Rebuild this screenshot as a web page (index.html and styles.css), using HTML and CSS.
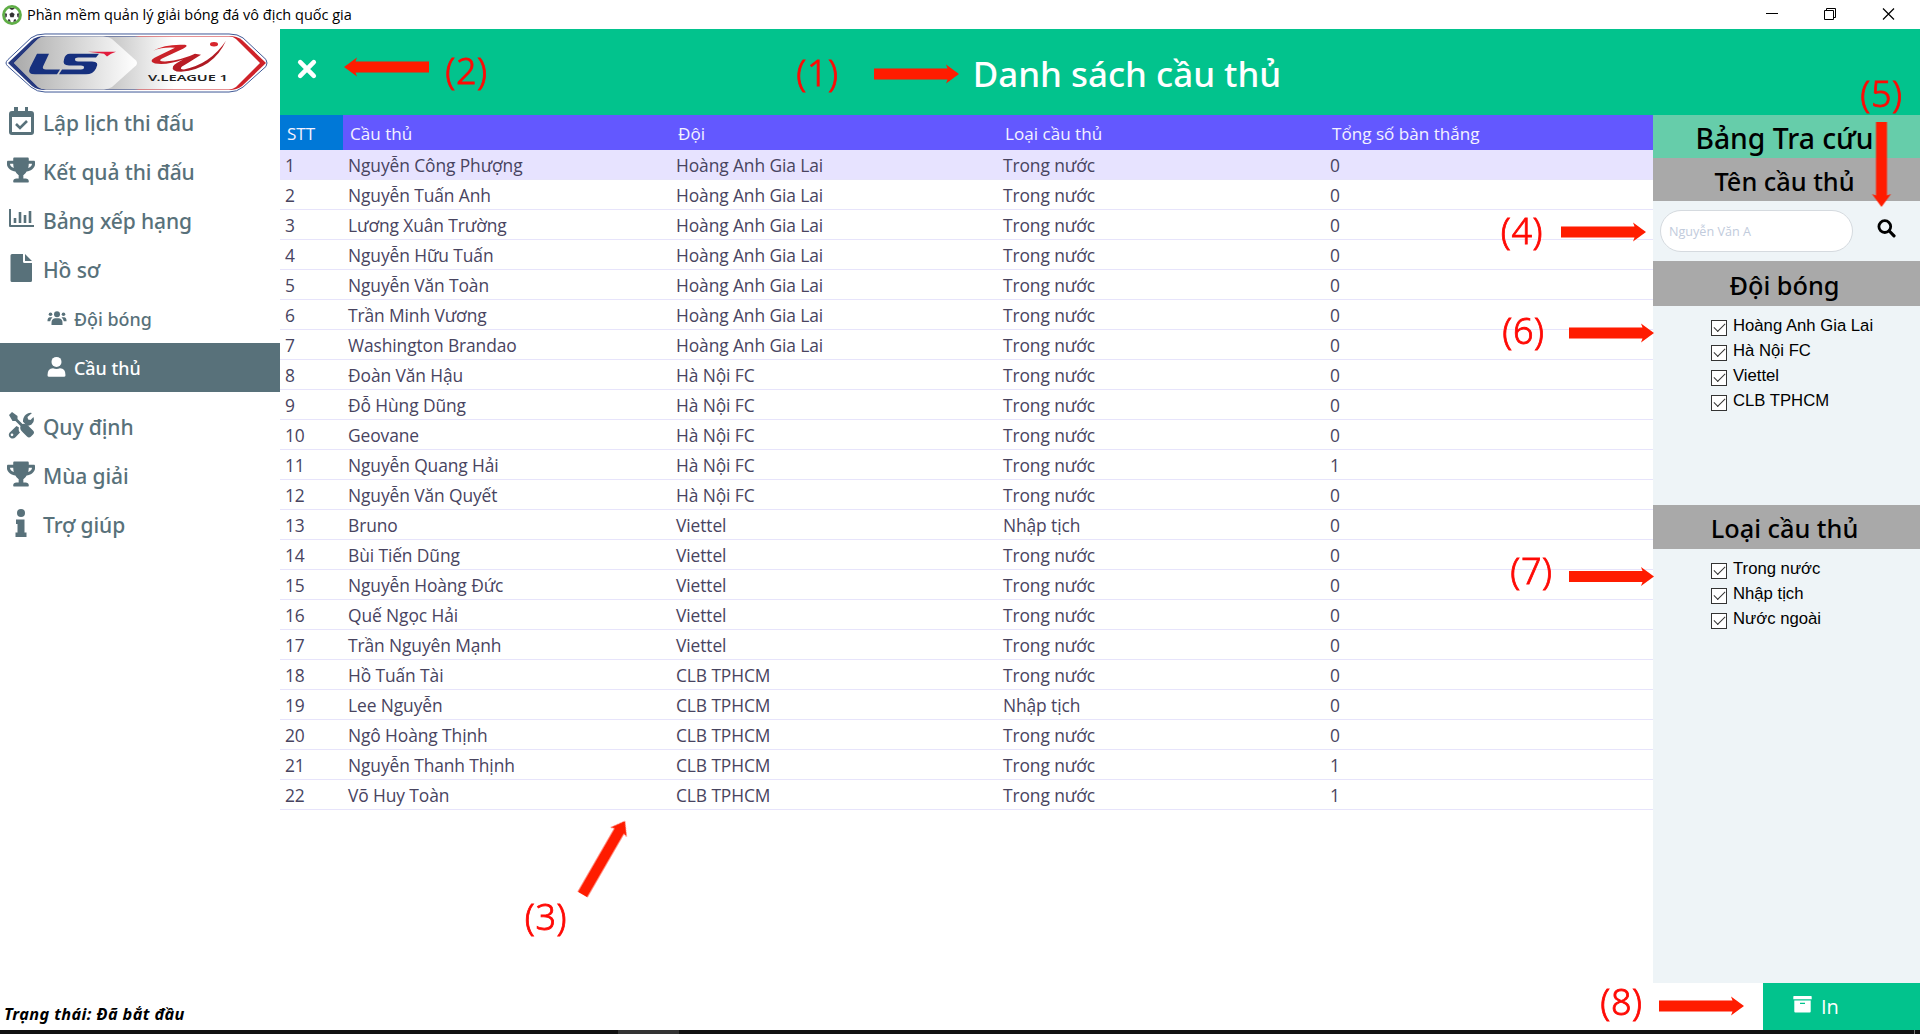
FILE: index.html
```
<!DOCTYPE html>
<html lang="vi">
<head>
<meta charset="utf-8">
<title>Phần mềm quản lý giải bóng đá vô địch quốc gia</title>
<link rel="stylesheet" href="styles.css">
</head>
<body>
<div class="window">
  <header class="titlebar">
    <svg class="ball" width="20" height="20" viewBox="0 0 20 20"><circle cx="10" cy="10" r="9.9" fill="#5fae46"/><circle cx="10" cy="10" r="7.2" fill="#fff"/><g fill="#333"><path d="M10 7.200l2.600 1.900-1 3.100H8.400l-1-3.100z"/><path d="M7 3.600l3 1.500 3-1.500-1.600-.7H8.600zM3 8.200l2 .6-.3 3L3.400 13zM17 8.200l-2 .6.3 3 1.300 1.200zM6 14.200l2 .3.700 2.500-2.500-1zM14 14.200l-2 .3-.7 2.500 2.500-1z"/></g></svg>
    <span class="titlebar-text">Phần mềm quản lý giải bóng đá vô địch quốc gia</span>
    <div class="controls">
      <svg width="58" height="29" viewBox="0 0 58 29"><path d="M23 13.500h12" stroke="#000"/></svg>
      <svg width="58" height="29" viewBox="0 0 58 29"><path d="M23.500 10.500h9v9h-9zM25.500 10.500v-2h9v9h-2" fill="none" stroke="#000"/></svg>
      <svg width="58" height="29" viewBox="0 0 58 29"><path d="M24 8.500l11 11M35 8.500l-11 11" stroke="#000" stroke-width="1.200"/></svg>
    </div>
  </header>

  <div class="main">
    <aside class="sidebar">
      <div class="logo">
        <svg width="264" height="60" viewBox="0 0 264 61" preserveAspectRatio="none">
          <defs>
            <linearGradient id="edge"><stop offset=".49" stop-color="#26397f"/><stop offset=".51" stop-color="#cf2229"/></linearGradient>
            <linearGradient id="silver"><stop offset="0" stop-color="#aaa"/><stop offset="1" stop-color="#fff"/></linearGradient>
            <linearGradient id="silver2"><stop offset=".4" stop-color="#c8c8c8"/><stop offset=".65" stop-color="#fff"/></linearGradient>
            <linearGradient id="swoosh" y2="1"><stop offset="0" stop-color="#e0262c"/><stop offset="1" stop-color="#9a1620"/></linearGradient>
          </defs>
          <path d="M1 30.500Q1 29 3 27L26 5Q31 1 40 1H224Q233 1 238 5L261 27Q263 30.500 261 34L238 55Q232 60 224 60H40Q32 60 26 55L3 34Q1 32 1 30.500z" fill="#fff" stroke="#3e5795"/>
          <path d="M3 30.500L27 7Q32 3 40 3H224Q232 3 237 7L261 30.500 237 54Q232 58 224 58H40Q32 58 27 54z" fill="url(#edge)"/>
          <path d="M9 30.500L33 6Q36 3.500 41 3.500H224Q228 3.500 231 6L255 30.500 231 55Q228 57.500 224 57.500H41Q36 57.500 33 55z" fill="url(#silver2)"/>
          <path d="M9 30.500L33 6Q36 3.500 41 3.500H98Q104 4 107 6L131 28Q133 30.500 131 33L107 55Q103 57.500 99 57.500H41Q36 57.500 33 55z" fill="url(#silver)"/>
          <g fill="#16307e"><path d="M32 21h12l-6 13q-1 3 3 3h14l-3 5H30q-8 0-5-7z"/><path d="M65 21h29l-3 4H73q-3 0-3 2t3 2h14q8 0 4 7-3 6-10 6H54l3-5h19q3 0 3-2t-3-2H64q-7 0-5-6 1-6 6-6z"/></g>
          <path d="M83 19h28l-5 2-4 3-3-3z" fill="#e21b3c"/>
          <path d="M148 18Q160 11 180 12 184 13 178 16L157 26Q152 29 160 29 178 27 190 21L196 22Q182 31 177 34 174 37 179 37 205 32 221 8 208 37 176 39.500 166 39 168 34 170 31 178 27 162 33 150 31 143 29 150 25L170 15Q158 14 148 18z" fill="url(#swoosh)"/>
          <ellipse cx="209" cy="11.500" rx="4" ry="2.300" fill="#d7262d"/>
          <text x="143" y="48.500" class="logo-text" textLength="80" lengthAdjust="spacingAndGlyphs">V.LEAGUE 1</text>
        </svg>
      </div>
      <nav class="nav">
        <a class="item"><svg class="icon" width="28" height="30" viewBox="0 0 28 30"><path fill-rule="evenodd" d="M7 1h4v4h7V1h3v4h3q3 0 3 3v18q0 3-3 3H5q-3 0-3-3V8q0-3 3-3h2zM5 11v15h19V11z"/><path d="M9 18l4 4 7-7" fill="none" stroke="#58717a" stroke-width="2.600"/></svg>Lập lịch thi đấu</a>
        <a class="item"><svg class="icon" width="28" height="26" viewBox="0 0 576 512"><path d="M552 64H448V24c0-13-11-24-24-24H152c-13 0-24 11-24 24v40H24C11 64 0 75 0 88v56c0 36 22 72 62 101 31 22 70 37 110 41 32 53 68 74 68 74v72h-48c-35 0-64 21-64 56v12c0 7 5 12 12 12h296c7 0 12-5 12-12v-12c0-35-29-56-64-56h-48v-72s36-21 68-74c40-4 79-19 110-41 39-28 62-65 62-101V88c0-13-11-24-24-24zM99 193c-25-18-35-38-35-49v-16h64c1 33 5 61 12 86-15-5-29-12-41-21zm413-49c0 16-17 36-35 49-12 9-26 16-41 21 7-25 11-53 12-86h64z"/></svg>Kết quả thi đấu</a>
        <a class="item"><svg class="icon" width="28" height="30" viewBox="0 0 28 30"><path d="M2 5h2v16h23v2H3q-1 0-1-1z"/><path d="M8 14v5M13 8v11M18 11v8M23 7v12" fill="none" stroke="#58717a" stroke-width="2.600"/></svg>Bảng xếp hạng</a>
        <a class="item"><svg class="icon" width="28" height="30" viewBox="0 0 28 30"><path d="M5 1h11v7.500q0 1.500 1.500 1.500H25v17.500q0 1.500-1.500 1.500H5q-1.500 0-1.500-1.500v-25Q3.500 1 5 1zM18 1l7 7h-7z"/></svg>Hồ sơ</a>
        <a class="item sub"><svg class="icon" width="20" height="16" viewBox="0 0 20 16"><circle cx="10" cy="4.200" r="3"/><circle cx="3.500" cy="4.300" r="1.800"/><circle cx="16.500" cy="4.300" r="1.800"/><path d="M4.500 15v-2Q4.500 8.700 8 8.300h4q3.500.4 3.500 4.700v2zM.5 10.500Q.5 7.500 3 7.200h2.500q-2 1.800-2.300 4H.5zM19.500 10.500q0-3-2.500-3.300h-2.500q2 1.800 2.300 4h2.700z"/></svg>Đội bóng</a>
        <a class="item sub active"><svg class="icon" width="20" height="22" viewBox="0 0 20 22"><circle cx="9.500" cy="5.900" r="5"/><path d="M.5 19.200q0-7 5.500-7 3.500 1.600 7 0 5.500 0 5.500 7 0 1.600-1.600 1.600H2.100Q.5 20.800.5 19.200z"/></svg>Cầu thủ</a>
        <a class="item gap"><svg class="icon" width="28" height="28" viewBox="0 0 28 28"><path d="M2 4l3-3 5.500 4v3l5 5q3-1 5.500 1.500l5 5q2 2 0 4l-2 2q-2 2-4 0l-5-5q-2.500-2.500-1.500-5.500l-5-5H5.500z"/><path d="M26.500 6q1.500 5-2 7.500-2 1.500-4.500 1l-1.500-1.300-2.500-2.400V10q0-4 3-6.500Q22 1 25 2l-4.500 4 .6 2.500 2.400.6zM12 16.500q-1 3 1 5l-4.500 4.700q-2 2-4.500 1-3.500-2-1.500-5.500l7-6.700zM5 22.500a1.300 1.300 0 100 2.700 1.300 1.300 0 000-2.700z" fill-rule="evenodd"/></svg>Quy định</a>
        <a class="item"><svg class="icon" width="28" height="26" viewBox="0 0 576 512"><path d="M552 64H448V24c0-13-11-24-24-24H152c-13 0-24 11-24 24v40H24C11 64 0 75 0 88v56c0 36 22 72 62 101 31 22 70 37 110 41 32 53 68 74 68 74v72h-48c-35 0-64 21-64 56v12c0 7 5 12 12 12h296c7 0 12-5 12-12v-12c0-35-29-56-64-56h-48v-72s36-21 68-74c40-4 79-19 110-41 39-28 62-65 62-101V88c0-13-11-24-24-24zM99 193c-25-18-35-38-35-49v-16h64c1 33 5 61 12 86-15-5-29-12-41-21zm413-49c0 16-17 36-35 49-12 9-26 16-41 21 7-25 11-53 12-86h64z"/></svg>Mùa giải</a>
        <a class="item"><svg class="icon" width="28" height="30" viewBox="0 0 28 30"><circle cx="14" cy="5" r="4"/><path d="M9 11.500h8.500v13H19.500V29H8.500v-4.500h2v-8.500H9z"/></svg>Trợ giúp</a>
      </nav>
      <footer class="status">Trạng thái: Đã bắt đầu</footer>
    </aside>

    <section class="content">
      <header class="banner">
        <button class="close"><svg width="22" height="22" viewBox="0 0 22 22"><path d="M4.200 4.200l13.600 13.600M17.800 4.200L4.200 17.800" stroke="#fff" stroke-width="4.600" stroke-linecap="round"/></svg></button>
        <h1>Danh sách cầu thủ</h1>
      </header>
      <div class="body">
        <table class="players">
          <thead><tr><th class="c-no">STT</th><th class="c-name">Cầu thủ</th><th class="c-team">Đội</th><th class="c-kind">Loại cầu thủ</th><th>Tổng số bàn thắng</th></tr></thead>
          <tbody>
            <tr class="selected"><td>1</td><td>Nguyễn Công Phượng</td><td>Hoàng Anh Gia Lai</td><td>Trong nước</td><td>0</td></tr>
            <tr><td>2</td><td>Nguyễn Tuấn Anh</td><td>Hoàng Anh Gia Lai</td><td>Trong nước</td><td>0</td></tr>
            <tr><td>3</td><td>Lương Xuân Trường</td><td>Hoàng Anh Gia Lai</td><td>Trong nước</td><td>0</td></tr>
            <tr><td>4</td><td>Nguyễn Hữu Tuấn</td><td>Hoàng Anh Gia Lai</td><td>Trong nước</td><td>0</td></tr>
            <tr><td>5</td><td>Nguyễn Văn Toàn</td><td>Hoàng Anh Gia Lai</td><td>Trong nước</td><td>0</td></tr>
            <tr><td>6</td><td>Trần Minh Vương</td><td>Hoàng Anh Gia Lai</td><td>Trong nước</td><td>0</td></tr>
            <tr><td>7</td><td>Washington Brandao</td><td>Hoàng Anh Gia Lai</td><td>Trong nước</td><td>0</td></tr>
            <tr><td>8</td><td>Đoàn Văn Hậu</td><td>Hà Nội FC</td><td>Trong nước</td><td>0</td></tr>
            <tr><td>9</td><td>Đỗ Hùng Dũng</td><td>Hà Nội FC</td><td>Trong nước</td><td>0</td></tr>
            <tr><td>10</td><td>Geovane</td><td>Hà Nội FC</td><td>Trong nước</td><td>0</td></tr>
            <tr><td>11</td><td>Nguyễn Quang Hải</td><td>Hà Nội FC</td><td>Trong nước</td><td>1</td></tr>
            <tr><td>12</td><td>Nguyễn Văn Quyết</td><td>Hà Nội FC</td><td>Trong nước</td><td>0</td></tr>
            <tr><td>13</td><td>Bruno</td><td>Viettel</td><td>Nhập tịch</td><td>0</td></tr>
            <tr><td>14</td><td>Bùi Tiến Dũng</td><td>Viettel</td><td>Trong nước</td><td>0</td></tr>
            <tr><td>15</td><td>Nguyễn Hoàng Đức</td><td>Viettel</td><td>Trong nước</td><td>0</td></tr>
            <tr><td>16</td><td>Quế Ngọc Hải</td><td>Viettel</td><td>Trong nước</td><td>0</td></tr>
            <tr><td>17</td><td>Trần Nguyên Mạnh</td><td>Viettel</td><td>Trong nước</td><td>0</td></tr>
            <tr><td>18</td><td>Hồ Tuấn Tài</td><td>CLB TPHCM</td><td>Trong nước</td><td>0</td></tr>
            <tr><td>19</td><td>Lee Nguyễn</td><td>CLB TPHCM</td><td>Nhập tịch</td><td>0</td></tr>
            <tr><td>20</td><td>Ngô Hoàng Thịnh</td><td>CLB TPHCM</td><td>Trong nước</td><td>0</td></tr>
            <tr><td>21</td><td>Nguyễn Thanh Thịnh</td><td>CLB TPHCM</td><td>Trong nước</td><td>1</td></tr>
            <tr><td>22</td><td>Võ Huy Toàn</td><td>CLB TPHCM</td><td>Trong nước</td><td>1</td></tr>
          </tbody>
        </table>
        <aside class="filters">
          <h2 class="head lookup">Bảng Tra cứu</h2>
          <h3 class="head name">Tên cầu thủ</h3>
          <div class="search">
            <input class="field" type="text" placeholder="Nguyễn Văn A">
            <svg width="19" height="19" viewBox="0 0 19 19"><circle cx="7.800" cy="7.600" r="5.900" fill="none" stroke="#000" stroke-width="2.800"/><path d="M12.300 12l4.700 4.800" stroke="#000" stroke-width="3.200" stroke-linecap="round"/></svg>
          </div>
          <h3 class="head team">Đội bóng</h3>
          <div class="checks teams">
            <label class="check"><i class="box"></i><span>Hoàng Anh Gia Lai</span></label>
            <label class="check"><i class="box"></i><span>Hà Nội FC</span></label>
            <label class="check"><i class="box"></i><span>Viettel</span></label>
            <label class="check"><i class="box"></i><span>CLB TPHCM</span></label>
          </div>
          <h3 class="head kind">Loại cầu thủ</h3>
          <div class="checks kinds">
            <label class="check"><i class="box"></i><span>Trong nước</span></label>
            <label class="check"><i class="box"></i><span>Nhập tịch</span></label>
            <label class="check"><i class="box"></i><span>Nước ngoài</span></label>
          </div>
        </aside>
      </div>
      <footer class="actions">
        <button class="print"><svg width="19" height="17" viewBox="0 0 19 17"><path d="M1 0h17q.7 0 .7.700V3.300H.3V.700Q.3 0 1 0z" fill="#fff"/><path fill="#fff" fill-rule="evenodd" d="M1.300 4.500h16.400v11q0 1-1 1H2.300q-1 0-1-1zM7 6.700v1.200h5V6.700z"/></svg>In</button>
      </footer>
    </section>
  </div>
  <div class="taskbar"><span class="task"></span><span class="edge"></span></div>

  <svg class="notes" width="1920" height="1034" viewBox="0 0 1920 1034">
    <defs>
      <filter id="soft" x="-10%" y="-50%" width="120%" height="200%"><feGaussianBlur stdDeviation=".7"/></filter>
      <path id="arrow" d="M0 0L-13-9.500-11.500-5.500H-85V5.500H-11.500L-13 9.500z"/>
    </defs>
    <g fill="#ff1c00">
      <g filter="url(#soft)">
        <use href="#arrow" transform="translate(959 74)"/>
        <use href="#arrow" transform="translate(344 67) rotate(180)"/>
        <use href="#arrow" transform="translate(625 821) rotate(-60)"/>
        <use href="#arrow" transform="translate(1646 232)"/>
        <use href="#arrow" transform="translate(1654 333)"/>
        <use href="#arrow" transform="translate(1654 576.500)"/>
        <use href="#arrow" transform="translate(1744 1006)"/>
        <use href="#arrow" transform="translate(1881.500 207) rotate(90)"/>
      </g>
    </g>
    <g class="labels">
      <text x="817.500" y="85.500">(1)</text><text x="466.500" y="83.500">(2)</text><text x="546" y="930">(3)</text><text x="1522" y="243.500">(4)</text>
      <text x="1881.500" y="107">(5)</text><text x="1523.500" y="344">(6)</text><text x="1531.500" y="584">(7)</text><text x="1621.500" y="1015">(8)</text>
    </g>
  </svg>
</div>
</body>
</html>
```
FILE: styles.css
```
* { box-sizing: border-box; }
body {
  margin: 0;
  font-family: "Open Sans", "Noto Sans", sans-serif;
  color: #000;
  background: #fff;
}
button { border: 0; padding: 0; font-family: inherit; }
h1, h2, h3 { margin: 0; font-family: "Noto Sans", sans-serif; font-weight: 500; }

.window {
  position: relative;
  display: flex;
  flex-direction: column;
  width: 1920px;
  height: 1034px;
  overflow: hidden;
}

.titlebar { display: flex; align-items: center; height: 29px; padding: 0 3px 0 2px; }
.titlebar-text { margin-left: 5px; font-size: 14.5px; }
.controls { display: flex; margin-left: auto; }

.main { display: flex; flex: 1; min-height: 0; }

.sidebar { display: flex; flex-direction: column; width: 280px; }
.logo { height: 69px; padding: 4px 0 0 5px; }
.logo svg { display: block; }
.logo-text { font: 600 9px "Noto Sans", sans-serif; fill: #222; }
.nav { display: flex; flex-direction: column; }
.item {
  display: flex;
  align-items: center;
  gap: 8px;
  height: 49px;
  padding-left: 8px;
  font: 500 21px "Noto Sans", sans-serif;
  letter-spacing: -0.1px;
  color: #58717a;
  fill: #58717a;
}
.icon { flex: none; margin: 0 1px 4px -1px; }
.sub { gap: 7px; padding-left: 47px; font-size: 17.9px; letter-spacing: 0; }
.sub .icon { margin: 0 0 2px; }
.active { background: #58717a; color: #fff; fill: #fff; }
.gap { margin-top: 10px; }
.item:not(.sub) .icon { margin-right: 0; }
.status {
  margin-top: auto;
  padding: 0 0 5px 4px;
  font-size: 16.3px;
  font-weight: 700;
  font-style: italic;
  font-family: "Noto Sans", sans-serif;
  letter-spacing: 0.4px;
}

.content { display: flex; flex-direction: column; flex: 1; }
.banner { display: flex; align-items: center; height: 86px; background: #02c38d; }
.close { display: grid; place-items: center; width: 54px; padding-bottom: 7px; background: none; }
.banner h1 { flex: 1; padding-top: 2px; text-align: center; font-size: 34.9px; color: #fff; }

.body { display: flex; flex: 1; align-items: flex-start; min-height: 0; }
.players {
  width: 1373px;
  table-layout: fixed;
  border-collapse: separate;
  border-spacing: 0;
  font-size: 17.4px;
  letter-spacing: -0.1px;
  color: #48445f;
}
.players th {
  height: 35px;
  padding: 1px 0 0 7px;
  text-align: left;
  font-size: 17.1px;
  letter-spacing: 0;
  font-weight: 400;
  color: #f4f2ff;
  background: #6358ff;
}
.players td { height: 30px; padding: 1px 0 0 5px; line-height: 24px; border-bottom: 1px solid #e7e4fb; }
.players .c-no { width: 63px; background: #0078d7; }
.c-name { width: 328px; }
.c-team, .c-kind { width: 327px; }
.selected { background: #e7e3ff; }

.filters { width: 267px; align-self: stretch; background: #eef4f7; }
.head {
  display: flex;
  align-items: center;
  justify-content: center;
  height: 44px;
  padding: 2px 4px 0 0;
  font-size: 25.3px;
  background: #a9a9a9;
}
.lookup { height: 43px; font-size: 28.3px; background: #66cdaa; }
.name { height: 43px; }
.team { height: 45px; }
.search { display: flex; align-items: center; height: 60px; padding-left: 7px; }
.search svg { margin: 0 0 5px 24px; }
.field {
  width: 193px;
  height: 42px;
  padding: 0 8px;
  border: 1px solid #d5dadf;
  border-radius: 21px;
  background: #fff;
  font: 12.6px "Open Sans", sans-serif;
}
.field::placeholder { color: #c1cbdc; }
.checks { padding: 9px 0 0 58px; font: 16.7px "Liberation Sans", sans-serif; }
.teams { height: 199px; }
.check { display: flex; align-items: center; gap: 6px; height: 25px; }
.check span { padding-bottom: 3px; white-space: nowrap; }
.box { display: grid; place-items: center; width: 16px; height: 16px; border: 1px solid #333; background: #fff; }
.box::before {
  content: "";
  width: 10px;
  height: 5px;
  margin-bottom: 3px;
  border: solid #333;
  border-width: 0 0 1.5px 1.5px;
  transform: rotate(-45deg);
}

.actions { display: flex; justify-content: flex-end; height: 47px; }
.print {
  display: flex;
  align-items: center;
  gap: 9px;
  width: 157px;
  padding-left: 30px;
  font-size: 20px;
  color: #fff;
  background: #02c38d;
}
.print svg { margin-bottom: 4px; }

.taskbar { display: flex; height: 4px; background: #111; }
.task { width: 61px; margin-left: 618px; background: #333; }
.edge { width: 1px; margin: 0 5px 0 auto; background: #777; }

.notes { position: absolute; top: 0; left: 0; pointer-events: none; }
.labels { fill: #ff0a05; font: 300 36px "Noto Sans", sans-serif; letter-spacing: 0.6px; text-anchor: middle; stroke: #ff0a05; stroke-width: 0.8px; }
```
